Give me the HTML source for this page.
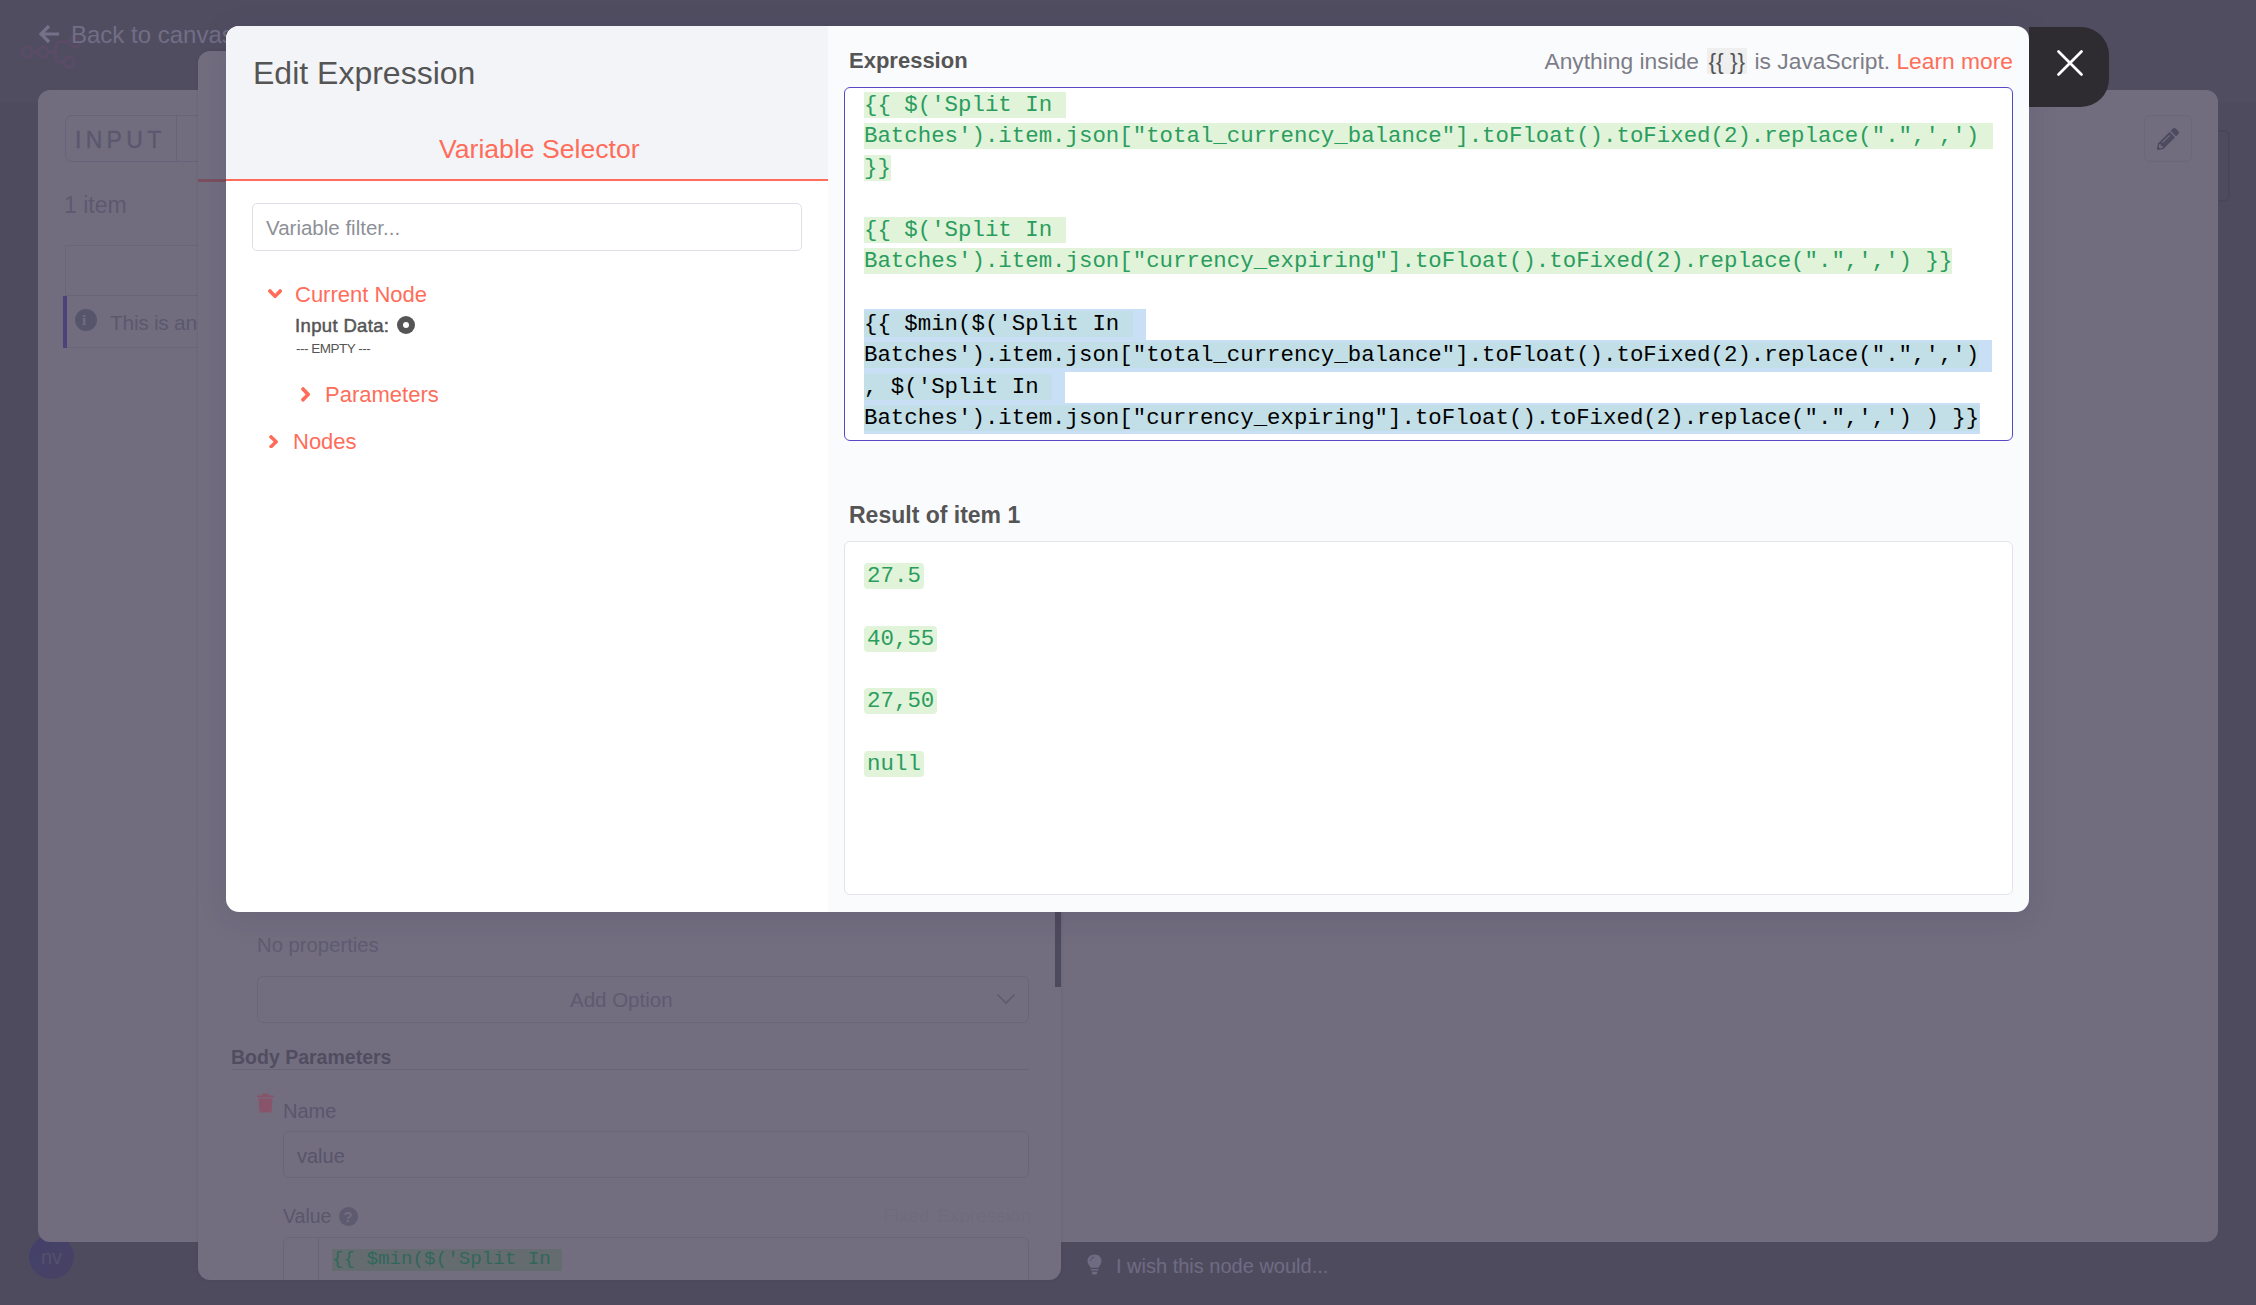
<!DOCTYPE html>
<html><head><meta charset="utf-8">
<style>
*{box-sizing:border-box;margin:0;padding:0}
html,body{width:2256px;height:1305px;overflow:hidden}
body{background:#4f4b5f;font-family:"Liberation Sans",sans-serif;position:relative}
.abs{position:absolute}
.t{position:absolute;white-space:nowrap;line-height:1}
/* background layer */
#bg{position:absolute;left:0;top:0;width:2256px;height:1305px}
.panel{position:absolute;background:#716d7f;border-radius:13px}
/* modal */
#modal{position:absolute;left:226px;top:26px;width:1803px;height:886px;box-shadow:0 6px 30px rgba(40,36,55,0.12);border-radius:13px;overflow:hidden;background:transparent}
#left{position:absolute;left:0;top:0;width:602px;height:886px;background:#fff}
#lhead{position:absolute;left:0;top:0;width:602px;height:154.6px;background:#f3f4f8;border-bottom:2px solid #ff6d5a}
#close{position:absolute;left:2029px;top:27px;width:80px;height:80px;background:#2e2c31;border-radius:0 28px 28px 0}
.mono{font-family:"Liberation Mono",monospace;font-size:22.4px;line-height:31.3px;white-space:pre}
.res{color:#2a9d5e;background:#e1f3d9}
#result .res{padding:0 3.1px;border-radius:4px}
.sel{color:#000;background:#c2dee6}
</style></head>
<body>
<div id="bg">
  <!-- header -->
  <div class="abs" style="left:0;top:0;width:2256px;height:103px;background:#514d61"></div>
  <svg class="abs" style="left:20px;top:36px" width="64" height="34" viewBox="0 0 64 34"><g fill="none" stroke="#5a4c66" stroke-width="3"><circle cx="7" cy="16" r="5"/><circle cx="23" cy="16" r="5"/><circle cx="49" cy="26" r="5"/><circle cx="55" cy="6" r="5"/><path d="M12 16 H18 M28 16 H32 Q36 16 36 12 V10 Q36 6 40 6 H50 M32 16 Q36 16 36 20 V22 Q36 26 40 26 H44"/></g></svg>
  <svg class="abs" style="left:38px;top:24px" width="22" height="20" viewBox="0 0 22 20"><path d="M11 2 L3 10 L11 18 M3 10 H21" fill="none" stroke="#757189" stroke-width="3.2" stroke-linejoin="miter"/></svg>
  <div class="t" style="left:71px;top:22.5px;font-size:24px;color:#726e86">Back to canvas</div>
  <div class="abs" style="left:29px;top:1235px;width:45px;height:44px;border-radius:50%;background:linear-gradient(135deg,#41416a,#4a4164)"></div>
  <div class="t" style="left:41px;top:1247px;font-size:20px;color:#55516b">nv</div>
  <!-- big panel -->
  <div class="panel" style="left:38px;top:90px;width:2180px;height:1152px;border-radius:12px"></div>
  <!-- left INPUT panel content -->
  <div class="abs" style="left:65px;top:115px;width:160px;height:47px;border:1px solid #67637a;border-radius:7px"></div>
  <div class="abs" style="left:176px;top:115px;width:1px;height:47px;background:#67637a"></div>
  <div class="t" style="left:75px;top:129px;font-size:23px;letter-spacing:4.3px;-webkit-text-stroke:0.4px #5b576e;color:#5b576e">INPUT</div>
  <div class="t" style="left:64px;top:193.5px;font-size:23px;color:#5d596f">1 item</div>
  <div class="abs" style="left:65px;top:245px;width:160px;height:103px;border:1px solid #69657b"></div>
  <div class="abs" style="left:65px;top:295px;width:160px;height:1px;background:#68647a"></div>
  <div class="abs" style="left:63px;top:296px;width:4px;height:52px;background:#4b437a"></div>
  <div class="abs" style="left:75px;top:309px;width:22px;height:22px;border-radius:50%;background:#57556b"></div>
  <div class="t" style="left:82px;top:313px;font-size:15px;font-weight:700;font-family:'Liberation Serif',serif;color:#716d80">i</div>
  <div class="t" style="left:110px;top:311.5px;font-size:21px;letter-spacing:-0.3px;color:#5b586e">This is an</div>
  <!-- right panel: pencil button -->
  <div class="abs" style="left:2218px;top:130px;width:12px;height:72px;border:2px solid #4a4659;border-left:none;border-radius:0 6px 6px 0"></div>
  <div class="abs" style="left:2144px;top:115px;width:48px;height:47px;border:1px solid #6a667c;border-radius:6px"></div>
  <svg class="abs" style="left:2157px;top:128px" width="22" height="22" viewBox="0 0 512 512"><path fill="#4e4a60" d="M497.9 142.1l-46.1 46.1c-4.7 4.7-12.3 4.7-17 0l-111-111c-4.7-4.7-4.7-12.3 0-17l46.1-46.1c18.7-18.7 49.1-18.7 67.9 0l60.1 60.1c18.8 18.7 18.8 49.1 0 67.9zM284.2 99.8L21.6 362.4.4 483.9c-2.9 16.4 11.4 30.6 27.8 27.8l121.5-21.300 262.6-262.6c4.7-4.7 4.7-12.3 0-17l-111-111c-4.8-4.7-12.4-4.700-17.1 0zM124.1 339.9c-5.5-5.5-5.5-14.3 0-19.8l154-154c5.5-5.5 14.3-5.5 19.8 0s5.5 14.3 0 19.8l-154 154c-5.5 5.5-14.3 5.5-19.8 0zM88 424h48v36.3l-64.5 11.3-31.1-31.1L51.7 376H88v48z"/></svg>
  <!-- center NDV panel -->
  <div class="panel" style="left:198px;top:51px;width:863px;height:1229px;border-radius:12px;background:#726e80;box-shadow:0 0 3px rgba(60,56,75,0.25)"></div>
  <div class="abs" style="left:198px;top:179px;width:30px;height:3px;background:#7a4f60"></div>
  <div class="t" style="left:257px;top:934.5px;font-size:20.3px;color:#5f5b71">No properties</div>
  <div class="abs" style="left:257px;top:976px;width:772px;height:47px;border:1px solid #69657b;border-radius:6px"></div>
  <div class="t" style="left:570px;top:990px;font-size:20.5px;color:#5e5a70">Add Option</div>
  <svg class="abs" style="left:996px;top:993px" width="20" height="12" viewBox="0 0 20 12"><path d="M1.5 1.5 L10 10 L18.5 1.5" fill="none" stroke="#5e5a70" stroke-width="1.6"/></svg>
  <div class="t" style="left:231px;top:1048px;font-size:19.5px;font-weight:700;color:#514d61">Body Parameters</div>
  <div class="abs" style="left:232px;top:1069px;width:797px;height:1px;background:#67637a"></div>
  <svg class="abs" style="left:257px;top:1093px" width="17" height="20" viewBox="0 0 17 20"><path d="M0 2.5 H17 V4.5 H0 Z M5.5 0.5 H11.5 V2.5 H5.5 Z M1.5 5.5 H15.5 L14.5 19.5 H2.5 Z" fill="#88546a"/></svg>
  <div class="t" style="left:283px;top:1100.5px;font-size:20px;color:#5a566c">Name</div>
  <div class="abs" style="left:283px;top:1131px;width:746px;height:47px;border:1px solid #69657b;border-radius:6px"></div>
  <div class="t" style="left:297px;top:1145.5px;font-size:20px;color:#58546a">value</div>
  <div class="t" style="left:283px;top:1207px;font-size:19.5px;color:#5a566c">Value</div>
  <div class="abs" style="left:339px;top:1207px;width:19px;height:19px;border-radius:50%;background:#5e5a70"></div>
  <div class="t" style="left:343.5px;top:1209px;font-size:15px;font-weight:700;color:#726e80">?</div>
  <div class="t" style="left:883px;top:1206px;font-size:19px;color:#6f6b7f">Fixed</div>
  <div class="t" style="left:937px;top:1206px;font-size:19px;color:#6f6b7f">Expression</div>
  <div class="abs" style="left:283px;top:1237px;width:746px;height:43px;border:1px solid #69657b;border-bottom:none;border-radius:6px 6px 0 0"></div>
  <div class="abs" style="left:318px;top:1237px;width:1px;height:43px;background:#68647a"></div>
  <div class="t" style="left:332px;top:1249px;font-family:'Liberation Mono',monospace;font-size:19.2px;line-height:21.75px;color:#31675a;background:#646c70;white-space:pre">{{ $min($('Split In </div>
  <div class="abs" style="left:1055px;top:905px;width:6px;height:82px;background:#4e4a5e"></div>
  <!-- footer -->
  <svg class="abs" style="left:1087px;top:1254px" width="15" height="21" viewBox="0 0 15 21"><path d="M7.5 0.5 C3.4 0.5 0.5 3.4 0.5 7 C0.5 10 2.7 11.6 3.6 13.8 H11.4 C12.3 11.6 14.5 10 14.5 7 C14.5 3.4 11.6 0.5 7.5 0.5 Z M3.8 15 H11.2 V16.6 H3.8 Z M4.6 17.8 H10.4 L9.4 20.5 H5.6 Z" fill="#6f6b83"/><path d="M3.6 7 C3.6 4.8 5.2 3.3 7.2 3.1" fill="none" stroke="#504c60" stroke-width="1"/></svg>
  <div class="t" style="left:1116px;top:1255.5px;font-size:20px;color:#6f6b83">I wish this node would...</div>
</div>

<div id="modal">
  <div id="left">
    <div id="lhead"></div>
    <div id="t_edit" class="t" style="left:27px;top:31px;font-size:32px;color:#555">Edit Expression</div>
    <div id="t_vs" class="t" style="left:213px;top:110px;font-size:26.6px;color:#ff6d5a">Variable Selector</div>
    <div id="filter" class="abs" style="left:26px;top:177px;width:550px;height:48px;border:1.5px solid #dcdfe6;border-radius:5px;background:#fff"></div>
    <div id="t_filter" class="t" style="left:40px;top:191.5px;font-size:20.5px;color:#8d9097">Variable filter...</div>
    <svg class="abs" style="left:41.80000000000001px;top:263px" width="14.2" height="9.4" viewBox="0 152 320 208" preserveAspectRatio="none"><path fill="#ff6d5a" d="M143 352.3L7 216.3c-9.4-9.4-9.4-24.6 0-33.9l22.6-22.6c9.4-9.4 24.6-9.4 33.9 0l96.4 96.4 96.4-96.4c9.4-9.4 24.6-9.4 33.9 0l22.6 22.6c9.4 9.4 9.4 24.6 0 33.9l-136 136c-9.2 9.4-24.4 9.4-33.8 0z"/></svg>
    <div id="t_cn" class="t" style="left:69px;top:258px;font-size:22px;color:#ff6d5a">Current Node</div>
    <div id="t_id" class="t" style="left:69px;top:290.5px;font-size:18.5px;-webkit-text-stroke:0.5px #555;letter-spacing:0.35px;color:#555">Input Data:</div>
    <div class="abs" style="left:171px;top:290px;width:18px;height:18px;border-radius:50%;background:#555"><div class="abs" style="left:6px;top:6px;width:6px;height:6px;border-radius:50%;background:#fff"></div></div>
    <div id="t_empty" class="t" style="left:70px;top:316px;font-size:13.5px;letter-spacing:-0.5px;color:#555">--- EMPTY ---</div>
    <svg class="abs" style="left:74.69999999999999px;top:361px" width="9.2" height="14.8" viewBox="24 96 208 320" preserveAspectRatio="none"><path fill="#ff6d5a" d="M224.3 273l-136 136c-9.4 9.4-24.6 9.4-33.9 0l-22.6-22.6c-9.4-9.4-9.4-24.6 0-33.9l96.4-96.4-96.4-96.4c-9.4-9.4-9.4-24.6 0-33.9L54.3 103c9.4-9.4 24.6-9.4 33.9 0l136 136c9.5 9.4 9.5 24.6.1 34z"/></svg>
    <div id="t_par" class="t" style="left:99px;top:358px;font-size:22px;color:#ff6d5a">Parameters</div>
    <svg class="abs" style="left:42.89999999999998px;top:408.5px" width="9.2" height="13.6" viewBox="24 96 208 320" preserveAspectRatio="none"><path fill="#ff6d5a" d="M224.3 273l-136 136c-9.4 9.4-24.6 9.4-33.9 0l-22.6-22.6c-9.4-9.4-9.4-24.6 0-33.9l96.4-96.4-96.4-96.4c-9.4-9.4-9.4-24.6 0-33.9L54.3 103c9.4-9.4 24.6-9.4 33.9 0l136 136c9.5 9.4 9.5 24.6.1 34z"/></svg>
    <div id="t_nodes" class="t" style="left:67px;top:405px;font-size:22px;color:#ff6d5a">Nodes</div>
  </div>
  <div id="right" class="abs" style="left:602px;top:0;width:1201px;height:886px;background:#fafbfd">
    <div id="t_expr" class="t" style="left:21px;top:24px;font-size:22px;font-weight:700;color:#555">Expression</div>
    <div id="t_help" class="t" style="right:16px;top:23.5px;font-size:22.8px;color:#7d7d87">Anything inside <span style="background:#efefef;color:#555;padding:0 1.5px;margin:0 1.5px">{{ }}</span> is JavaScript. <span style="color:#ff6d5a">Learn more</span></div>
    <div id="codebox" class="abs" style="left:16px;top:61px;width:1169px;height:354px;border:1px solid #5848c8;border-radius:6px;background:#fff"></div>
    <div class="abs" style="left:36px;top:283.10px;width:282px;height:31.3px;background:#c9dff6"></div>
    <div class="abs" style="left:36px;top:314.40px;width:1128px;height:31.3px;background:#c9dff6"></div>
    <div class="abs" style="left:36px;top:345.70px;width:201px;height:31.3px;background:#c9dff6"></div>
    <div class="abs" style="left:36px;top:377.00px;width:1115.5px;height:31.3px;background:#c9dff6"></div>
    <div id="code" class="abs mono" style="left:36px;top:64px;color:#000"><span class="res">{{ $('Split In </span>
<span class="res">Batches').item.json["total_currency_balance"].toFloat().toFixed(2).replace(".",',') </span>
<span class="res">}}</span>

<span class="res">{{ $('Split In </span>
<span class="res">Batches').item.json["currency_expiring"].toFloat().toFixed(2).replace(".",',') }}</span>

<span class="sel">{{ $min($('Split In </span>
<span class="sel">Batches').item.json["total_currency_balance"].toFloat().toFixed(2).replace(".",',')</span>
<span class="sel">, $('Split In </span>
<span class="sel">Batches').item.json["currency_expiring"].toFloat().toFixed(2).replace(".",',') ) }}</span></div>
    <div id="t_res" class="t" style="left:21px;top:478px;font-size:23px;font-weight:700;color:#555">Result of item 1</div>
    <div id="resbox" class="abs" style="left:16px;top:515px;width:1169px;height:354px;border:1.5px solid #e2e4ea;border-radius:6px;background:#fff"></div>
    <div id="result" class="abs mono" style="left:36px;top:535px;color:#2a9d5e"><span class="res">27.5</span>

<span class="res">40,55</span>

<span class="res">27,50</span>

<span class="res">null</span></div>
  </div>
</div>
<div id="close"><svg class="abs" style="left:26.5px;top:22px" width="28" height="28" viewBox="0 0 28 28"><path d="M2.5 2.5 L25.5 25.5 M25.5 2.5 L2.5 25.5" stroke="#fff" stroke-width="2.7" stroke-linecap="round"/></svg></div>
</body></html>
